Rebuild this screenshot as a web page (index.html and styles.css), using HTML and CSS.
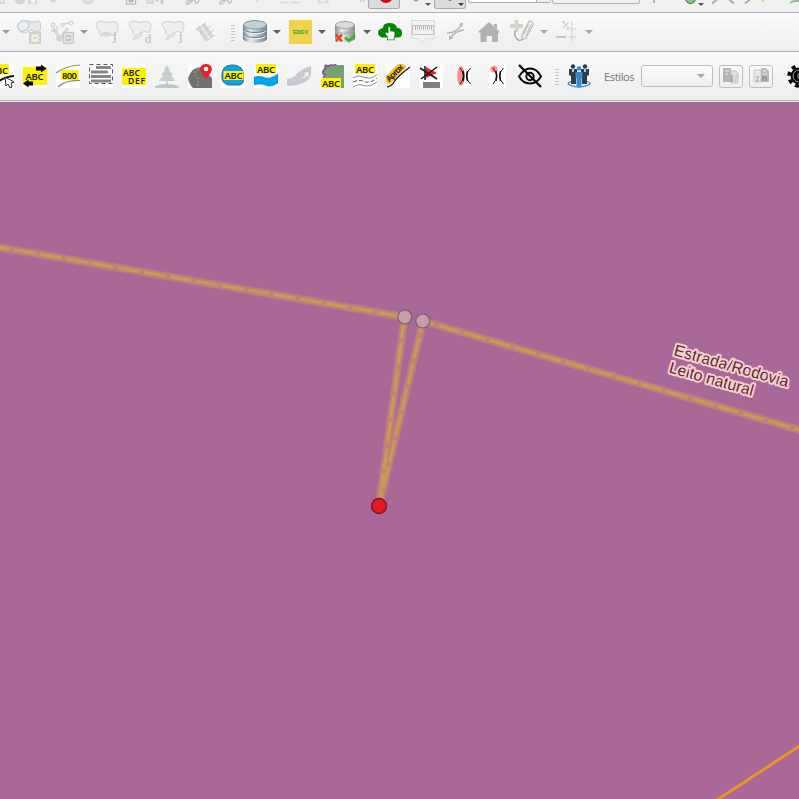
FILE: index.html
```html
<!DOCTYPE html>
<html lang="pt">
<head>
<meta charset="utf-8">
<title>Mapa</title>
<link rel="stylesheet" href="styles.css">
</head>
<body>
<div class="bar top">
  <svg width="368" height="12" fill="none" stroke="#d2d2cd" stroke-width="1.5">
    <path d="M0 0v3h4V0" stroke="#e0cccc"/><circle cx="20" cy="-1" r="4.500" fill="#d5d5d5"/><rect x="28" y="-5" width="9" height="9" fill="#e0d2d2" stroke="none"/><path d="M31 0l4 3M35 0l-4 3" stroke="#fff"/>
    <circle cx="53" cy="-1" r="2.500" fill="#ccc"/><circle cx="88" cy="-2" r="5.500" fill="#dcdcd4"/>
    <rect x="126.500" y="-5" width="9" height="9" stroke="#bdc1c1"/><path d="M129 0q2 3 4 0" stroke="#9fa5a5"/>
    <path d="M147 0v3h6V0M149 0l3 3" stroke="#dfcccc"/><path d="M156 1l2-2M162 0v4" stroke="#c8c8c8" stroke-width="3"/>
    <path d="M192 0c-5 0-7 4-4 4 3-1 4-4 6-4s1 4 3 3 2-3 1-3M225 0c-5 0-7 4-4 4 3-1 4-4 6-4s1 4 3 3 2-3 1-3" stroke="#c9c2c2"/>
    <path d="M256 0l2 2M280 2.500h9M291 2.500h9M318 2.500h10l-2-3M320 0l-2 2" stroke="#d6d6d6"/>
    <path d="M361 0v2M364 0v2" stroke="#bbb" stroke-width="1"/>
  </svg>
  <span class="pressed rec"><svg width="30" height="8"><circle cx="17" cy="-4" r="7" fill="#d80505"/></svg></span>
  <svg width="34" height="12"><circle cx="16" cy="-1" r="2.500" fill="#999"/><path d="M25 3h6l-3 3z" fill="#555"/></svg>
  <span class="pressed tool"><svg width="30" height="8"><circle cx="15" cy="-1" r="2" fill="#777"/><path d="M23 3h6l-3 3z" fill="#444"/></svg></span>
  <span class="spin"><i></i></span>
  <span class="field"></span>
  <svg width="159" height="12" fill="none" stroke="#85bd85" stroke-width="1.800"><path d="M14 0v3M72 3.500l5-4M94 3.500l-5-4M105 3.500l5-4"/><circle cx="50.500" cy="-1.500" r="5" fill="#8bc48b" stroke="#555" stroke-width="1"/><path d="M58 3h6l-3 3z" fill="#555" stroke="none"/><path d="M123 0v2" stroke="#f0ca53"/><path d="M150 3q4-3 9-2"/><path d="M155 0h4v2" stroke="#aaa"/></svg>
</div>

<div class="bar mid">
  <b class="arrow a0"></b>
  <svg class="ic g9" viewBox="0 0 24 24" fill="none"><path d="M6 1h6q3 2 9 0 4 0 2 10-5 2-9-1-3 2-6 3-6 0-7-5Q0 2 6 1z" fill="#e6e6e4" stroke="#cbcac6"/><path d="M5 1q5-1 7 2 0 5-3 7-3 2-6 1Q-1 7 2 3z" fill="#e9eef2" stroke="#b9c2ca"/><rect x="12.500" y="12.500" width="11" height="11" fill="#d9d7cb" stroke="#cdcbc0"/><path d="M18 14v8M14 18h8M15 15l6 6M21 15l-6 6" stroke="#fff" stroke-width="1.100"/><circle cx="18" cy="18" r="1.500" fill="#d0cebf"/></svg>
  <svg class="ic g9" viewBox="0 0 24 24" fill="none" stroke="#d2d2d0" stroke-width="1.300"><circle cx="3" cy="5" r="1.800"/><circle cx="21" cy="3" r="1.800"/><circle cx="12.500" cy="5" r="1.500"/><path d="M3 8l6 9M18 8l-7 9" stroke-width="2.300"/><path d="M14 4l5-1M1 11h6V6"/><circle cx="9.500" cy="18.500" r="2.500" fill="#d2d2d0"/><rect x="13.500" y="12.500" width="10" height="11" fill="#e3e4e6" stroke="#c5c9ce"/><path d="M16 17a3 3 0 0 1 5 0M21 19a3 3 0 0 1-5 0" stroke="#b4bac1" stroke-width="1.500"/></svg>
  <b class="arrow g6"></b>
  <svg class="ic g7" viewBox="0 0 24 24" fill="none"><path class="poly" d="M4 1.500q4-1 8 1 4-1 7-1 4 0 4 4 0 5-2 9l-4 1q-6-3-10 1-3-1-3-6Q-2 3 4 1.500z"/><path d="M5 14q6-5 13 1l-7 2z" fill="#d8d8d6"/><text x="18" y="20" class="let">j</text></svg>
  <svg class="ic g9" viewBox="0 0 24 24" fill="none"><path class="poly" d="M4 1.500q4-1 8 1 4-1 7-1 4 0 4 4 0 4-2 7-5-2-8 0-3 4-6 3-3-1-3-6Q-2 3 4 1.500z"/><path d="M5 18l8-5 1 2-8 5z" class="poly"/><text x="17" y="22.500" class="let">d</text></svg>
  <svg class="ic g9" viewBox="0 0 24 24" fill="none"><path class="poly" d="M4 1.500q4-1 8 1 4-1 7-1 4 0 4 4 0 4-2 7-5-2-8 0-3 4-6 3-3-1-3-6Q-2 3 4 1.500z"/><path d="M5 18l8-5 1 2-8 5z" class="poly"/><text x="18" y="20" class="let">j</text></svg>
  <svg class="ic g9" viewBox="0 0 24 24" fill="none" stroke="#d6d6d4"><path d="M4 7l9 13M9 4l9 13" stroke-width="4"/><path d="M2 10l10-7M6 14l11-8M9 18l11-8M12 21l9-6" stroke="#cacac8" stroke-width="1"/><path d="M6 5l11 15" stroke="#f0f0f0" stroke-width=".8"/></svg>
  <i class="grip g13"></i>
  <svg class="ic g8" viewBox="0 0 24 24"><defs><linearGradient id="m"><stop offset="0" stop-color="#71858d"/><stop offset=".3" stop-color="#e3ecef"/><stop offset=".6" stop-color="#b2c2c9"/><stop offset="1" stop-color="#6d7e87"/></linearGradient></defs><path d="M0 4.500v14.500c2 5 22 5 24 0V4.500z" fill="url(#m)"/><ellipse cx="12" cy="4.800" rx="11.500" ry="4.200" fill="#c3d0d5" stroke="#82939a"/><path d="M.5 9.500c3 4 20 4 23 0M.5 14.500c3 4 20 4 23 0" fill="none" stroke="#6c7e87"/><path d="M1 10.800c3 4 19 4 22 0M1 15.800c3 4 19 4 22 0" fill="none" stroke="#eef4f6"/></svg>
  <b class="arrow g6 dark"></b>
  <span class="edgv">EDGV</span>
  <b class="arrow g6 dark"></b>
  <svg class="ic g7" viewBox="0 0 24 24"><defs><linearGradient id="s"><stop offset="0" stop-color="#8c8c8c"/><stop offset=".35" stop-color="#eee"/><stop offset="1" stop-color="#868686"/></linearGradient></defs><path d="M2 5v14c2 4 18 4 20 0V5z" fill="url(#s)"/><ellipse cx="12" cy="5" rx="9.500" ry="3.500" fill="#dadada" stroke="#a3a3a3"/><path d="M2 11c3 3 17 3 20 0" fill="none" stroke="#a3a3a3"/><path d="M3 14.500l6 7M9 14.500l-6 7" stroke="#e8431c" stroke-width="2.500"/><path d="M12 17.500l4 3.500 6-6" fill="none" stroke="#35ba21" stroke-width="2.500"/></svg>
  <b class="arrow g6 dark"></b>
  <svg class="ic g7" viewBox="0 0 24 24"><path d="M4 17.500Q0 16 0 12.500T5 8Q5 3 11.500 3 18 3 19 8q5 0 5 5t-5 4.500z" fill="#058505"/><path d="M9.500 20v-3L7 13.500q1-2 3-.5V7.500q1-2 2.500 0V11q5-.5 4.500 3l-1 6z" fill="#f6f6f6" stroke="#058505" stroke-width=".8"/><path d="M8.500 20.500h9" stroke="#c8d8c8"/></svg>
  <svg class="ic g9" viewBox="0 0 24 24" fill="none"><path d="M.5.500h23v18H15l-3.500 4-3.500-4H.5z" fill="#f3f3f2" stroke="#d8d8d6"/><rect x="1.500" y="5.500" width="21" height="9" stroke="#c2c2c2"/><path d="M4.500 6v4M6.500 6v3M8.500 6v4M10.500 6v3M12.500 6v4M14.500 6v3M16.500 6v4M18.500 6v3M20.500 6v4" stroke="#b5b5b3"/></svg>
  <svg class="ic g9" viewBox="0 0 24 24" fill="none" stroke="#b3b3b3" stroke-width="1.500"><path d="M3 13q10 0 14-8M6 19q4-8 14-9"/><path d="M15 4l4-1.500-.5 4.500zM5 15.500V20l4-2z" fill="#b3b3b3" stroke="none"/></svg>
  <svg class="ic g9" viewBox="0 0 24 24"><path d="M12 2l11 10-2 1v9h-6v-6H9.500v6H3.500v-9l-2.500-1zM17 4h3v5l-3-3z" fill="#b2b2b2"/></svg>
  <svg class="ic g9" viewBox="0 0 24 24" fill="none"><path d="M6.500 0v12M0 6h13" stroke="#d0d7ca" stroke-width="4"/><path d="M5 11q-1 5 2 8 3 3 5 0" stroke="#a3a3a3" stroke-width="1.300"/><path d="M19 1q5 0 4 4l-7 13-4 2 0-5z" fill="#eee" stroke="#aeaeaa"/><path d="M18.500 3.500l-5 11M21 4.500l-5 11" stroke="#bcbcb8"/></svg>
  <b class="arrow g6 mute"></b>
  <svg class="ic g8" viewBox="0 0 24 24" fill="none" stroke="#d2d2d2" stroke-width="1.300"><path d="M7 2l6 6M13 2l-6 6M6 2h3"/><path d="M0 17h10" stroke="#c0c8c0" stroke-width="2"/><path d="M13 17h7M16 2v19M10 9h10" stroke-dasharray="3 1"/></svg>
  <b class="arrow g5 mute"></b>
</div>

<div class="bar labels">
  <svg class="ic card" viewBox="0 0 24 24"><rect y="0" width="19" height="10.500" rx="2" fill="#fff200"/><text x="0" y="9.500" class="abc" textLength="18">ABC</text><path d="M6 20Q12 13 24 12" stroke="#111" stroke-width="1.800" fill="none"/><path d="M15 13l1 9 2-2 2 4 2-1-1-4 3-1z" fill="#fff" stroke="#222"/></svg>
  <svg class="ic card" viewBox="0 0 24 24"><rect y="3" width="24" height="18" fill="#fff200"/><text x="2.500" y="15.500" class="abc" textLength="18">ABC</text><path d="M13 2.500h5V.5l5.500 4L18 8.500v-2h-5zM10 17.500H5.500v-2L0 19.500l5.500 4v-2H10z"/></svg>
  <svg class="ic card" viewBox="0 0 24 24"><path d="M0 9Q9 2 24 1M2 23Q10 16 24 16.500" stroke="#8a8a8a" stroke-width="1.200" fill="none"/><rect x="5" y="6" width="17.500" height="10" rx="1" fill="#fff200"/><text x="6" y="14.700" class="abc" textLength="15">800</text></svg>
  <svg class="ic card" viewBox="0 0 24 24"><rect x=".5" y=".5" width="23" height="19" fill="none" stroke="#555" stroke-dasharray="4 3"/><path d="M7 3.500h15M2 8h17M2 12.500h20M2 17h20" stroke="#858585" stroke-width="3"/></svg>
  <svg class="ic card" viewBox="0 0 24 24"><rect y="4" width="24" height="17" fill="#fff200"/><text x="1" y="11.500" class="abc s" textLength="17">ABC</text><text x="6" y="20" class="abc s" textLength="17">DEF</text></svg>
  <svg class="ic" viewBox="0 0 24 24"><rect width="24" height="24" fill="#f4f4f4"/><path d="M12 1l3 5h-1l4 5h-2l4 6h-7v5h-2v-5H4l4-6H6l4-5H9z" fill="#c8cecc"/><path d="M0 22q12-4 24 0v2H0z" fill="#bac9c8"/></svg>
  <svg class="ic card" viewBox="0 0 24 24"><path d="M0 14Q4 3 13 3l11 11v10H5q-4-4-5-10z" fill="#717171"/><path d="M9 22Q12 15 8 12t4-8" stroke="#d8cc2a" stroke-width=".8" stroke-dasharray="2 1.500" fill="none"/><path d="M18 15q-6-7-6-10 1-5 6-5t6 5q0 3-6 10z" fill="#f11c28"/><circle cx="18" cy="5" r="2.300" fill="#fff"/></svg>
  <svg class="ic card" viewBox="0 0 24 24"><path d="M1 15Q0 4 6 2q8-3 14 2 4 4 2 9 2 7-4 8H8q-6-1-7-6z" fill="#08a4ef" stroke="#376882"/><rect x="2.500" y="7" width="20" height="9" fill="#fff200"/><text x="3.500" y="15" class="abc" textLength="18">ABC</text></svg>
  <svg class="ic card" viewBox="0 0 24 24"><path d="M0 13q6-2 12 1 5 1 12-4v9q-7 5-13 2-5-2-11 0z" fill="#00a3ee" stroke="#0087c5" stroke-width=".5"/><rect x="2" y="0" width="20" height="9.500" fill="#fff200"/><text x="3" y="8.500" class="abc" textLength="18">ABC</text></svg>
  <svg class="ic" viewBox="0 0 24 24"><rect width="24" height="24" fill="#f5f5f5"/><path d="M0 15q6-1 9-4 3-5 15-9v9q-3 7-9 8-3 3-15 3z" fill="#c4cacf"/><path d="M12 14.500q5-1 6.500-4.500l-2-1 5-1v5l-1.500-1.500q-2 3-8 3z" fill="#f4f4f4"/></svg>
  <svg class="ic card" viewBox="0 0 24 24"><path d="M5 1h19v23H12l-5-8H5q-1-4 0-5-4-2-1-5 2-1 1-5z" fill="#75a172"/><path d="M5 1q3 2 6 0 4 1 5-1M5 1q1 3-1 5-3 3 1 5-3 4 0 5" fill="none" stroke="#81559c" stroke-width="1.800"/><rect x="1" y="14" width="20" height="10" fill="#fff200"/><text x="2" y="22.800" class="abc" textLength="18">ABC</text></svg>
  <svg class="ic card" viewBox="0 0 24 24"><rect x="2" y="0" width="20" height="9.500" fill="#fff200"/><text x="3" y="8.500" class="abc" textLength="18">ABC</text><path d="M0 13.500q7-3 12 0 6 2 12-3M0 23q6-4 12-1 6 1 12-4" fill="none" stroke="#7b868e" stroke-width=".9"/><path d="M0 18q7-3 12 0 6 1 12-4" fill="none" stroke="#444" stroke-width=".9" stroke-dasharray="4 2"/></svg>
  <svg class="ic card" viewBox="0 0 24 24"><g transform="rotate(-46 9 10)"><rect x="-3" y="5" width="25" height="8.500" fill="#f9c423"/><text x="-1" y="12" class="abc s" textLength="21">Aprox</text></g><path d="M1 23q5-1 7-5Q12 12 24 3" fill="none" stroke="#111" stroke-width="1.300"/></svg>
  <svg class="ic card" viewBox="0 0 24 24"><path d="M7 3l11 6-11 5z" fill="#ef1e2b"/><path d="M1 4l17 11M2 15L18 3M6 2v14" stroke="#111" stroke-width="1.500"/><rect x="4" y="18" width="17" height="6" fill="#808080"/></svg>
  <svg class="ic narrow" viewBox="0 0 24 24"><rect x="5" width="14" height="24" fill="#fff"/><ellipse cx="9" cy="12" rx="3.800" ry="10" fill="#ff8c8c"/><path d="M8 4q7 8 0 16M18.500 4q-8 8 0 16" fill="none" stroke="#111"/><path d="M11 7q1.500 5 0 10M15.500 7q-1.500 5 0 10" fill="none" stroke="#111" stroke-width="1.600"/></svg>
  <svg class="ic narrow" viewBox="0 0 24 24"><rect x="4" width="17" height="24" fill="#fff"/><circle cx="9" cy="5" r="3.500" fill="#ff8c8c"/><path d="M8 4q7 8 0 16M18.500 4q-8 8 0 16" fill="none" stroke="#111"/><path d="M11 7q1.500 5 0 10M15.500 7q-1.500 5 0 10" fill="none" stroke="#111" stroke-width="1.500"/></svg>
  <svg class="ic" viewBox="0 0 24 24" fill="none" stroke="#080808" stroke-width="2"><path d="M1 12.500Q6 4.500 12 4.500q7 0 11 8-4 7-11 7T1 12.500z"/><circle cx="12" cy="12.500" r="3.700"/><path d="M1 1l22 22" stroke-width="2.300"/></svg>
  <i class="grip lg"></i>
  <svg class="ic people" viewBox="0 0 24 24"><path d="M4 17.500q-6 2 0 4 8 3 16 0 6-2 0-4" fill="none" stroke="#3186c9" stroke-width="1.300"/><circle cx="6" cy="2.500" r="2.200" fill="#293e51"/><circle cx="18" cy="2.500" r="2.200" fill="#293e51"/><path d="M2 5h8v8H9v7H4v-8l-2-1zM14 5h8v6l-2 1v8h-5v-7h-1z" fill="#293e51"/><path d="M5.300 5L6 8l.7-3M17.300 5l.7 3 .7-3" stroke="#fff" stroke-width=".8" fill="none"/><circle cx="12" cy="4.500" r="2.200" fill="#3189ce"/><path d="M8.500 8h7v6h-1v8h-5v-8h-1z" fill="#3189ce"/></svg>
  <span class="estilos">Estilos</span>
  <span class="combo"><b class="arrow mute"></b></span>
  <span class="btn b1"><svg width="18" height="18"><path d="M1 1h8v14H1z" fill="#b4b4b4"/><path d="M9 4h5l2 2v10H9z" fill="#e3e3e3" stroke="#c2c2c2"/><path d="M3 4h4M3 7h3" stroke="#eee"/><path d="M5 8h6v7H8V9" fill="#acacac"/><path d="M12 9h3l-3 5h3" stroke="#c0c0c0" fill="none"/></svg></span>
  <span class="btn b2"><svg width="18" height="18"><path d="M2 3h7v12H2z" fill="#e6e6e6" stroke="#ccc"/><path d="M9 1h5l3 3v11H9z" fill="#bababa"/><path d="M3 5h4M11 4h3M11 7h4" stroke="#eee"/><path d="M4 10h3l-3 4h3" stroke="#a3a3a3" fill="none"/><path d="M11 14v-4h3v4" stroke="#8c8c8c" stroke-width="1.500" fill="none"/></svg></span>
  <svg class="ic gear" viewBox="0 0 24 24"><circle cx="12" cy="12" r="8.500" fill="#050505"/><circle cx="12" cy="12" r="10" fill="none" stroke="#050505" stroke-width="3.500" stroke-dasharray="4 3.850"/><circle cx="12" cy="12" r="6" fill="none" stroke="#bbb" stroke-width=".8"/><circle cx="13" cy="12" r="3" fill="#666"/></svg>
</div>

<svg class="map" viewBox="0 103 799 696">
  <g class="halo"><path d="M-5 246.600L404.500 317"/><path d="M404.500 317L379 506L423 321"/><path d="M423 321L805 431.500"/></g>
  <g class="edge"><path d="M-5 246.600L404.500 317"/><path d="M404.500 317L379 506L423 321"/><path d="M423 321L805 431.500"/></g>
  <g class="dash"><path d="M0 247.500L404.500 317" stroke-dashoffset="12.300"/><path d="M404.500 317L379 506"/><path d="M379 506L423 321" stroke-dashoffset="7"/><path d="M423 321L805 431.500" stroke-dashoffset="10"/></g>
  <path d="M717 800L801 745" stroke="#e99527" stroke-width="3"/>
  <g class="nodes"><circle cx="404.800" cy="317" r="7"/><circle cx="422.800" cy="321" r="7"/></g>
  <circle cx="379" cy="506" r="7.500" fill="#e51921" stroke="#8b111f" stroke-width="1.300"/>
  <g class="maplabel" transform="translate(673 355) rotate(15.700)"><text x="0" y="0" textLength="118.500">Estrada/Rodovia</text><text x="0" y="18" textLength="87">Leito natural</text></g>
</svg>
</body>
</html>
```
FILE: styles.css
```css
* { box-sizing: border-box; }
body { margin: 0; width: 799px; height: 799px; overflow: hidden; background: #efefef; font-family: "Open Sans", "Noto Sans", sans-serif; }
svg { display: block; flex: none; }
.bar { display: flex; align-items: center; width: 799px; overflow: hidden; background: linear-gradient(#fafafa, #ededed); border-bottom: 1px solid #b1b1b1; }
.top { height: 13px; align-items: flex-start; background: #f0f0f0; }
.mid { height: 39px; }
.labels { height: 49px; box-shadow: inset 0 1px #fdfdfd; }
.ic { width: 24px; height: 24px; overflow: hidden; }
.card { background: #fff; }
.narrow { overflow: hidden; }

.pressed { flex: none; height: 9px; background: #dcdcdc; border: 1px solid #aaa; border-top: 0; border-radius: 0 0 3px 3px; }
.rec { width: 32px; }
.tool { width: 32px; }
.spin { flex: none; width: 83px; height: 3px; margin-left: 2px; border: 1px solid #aaa; border-top: 0; border-radius: 0 0 3px 3px; background: #fff; display: flex; justify-content: flex-end; }
.spin i { width: 14px; background: #eee; border-left: 1px solid #aaa; }
.field { flex: none; width: 88px; height: 4px; margin-left: 1px; border: 1px solid #b0b0b0; border-top: 0; border-radius: 0 0 3px 3px; }

.arrow { flex: none; width: 8px; height: 4px; background: #999; clip-path: polygon(0 0, 100% 0, 50% 100%); }
.dark { background: #5c5c5c; }
.mute { background: #a5a5a5; }
.a0 { margin-left: 2px; }
.g5 { margin-left: 5px; }
.g6 { margin-left: 6px; }
.g7 { margin-left: 7px; }
.g8 { margin-left: 8px; }
.g9 { margin-left: 9px; }
.g13 { margin-left: 13px; }
.a0 + .g9 { margin-left: 7px; }
.grip { flex: none; width: 4px; height: 17px; background: radial-gradient(circle, #b4b4b4 0.6px, transparent 0.9px) 0 0 / 2px 3px; opacity: .7; }
.poly { fill: #eeeeec; stroke: #d0d0ce; }
.let { font: 12.500px "Liberation Serif", serif; fill: #b4b4b4; }
.edgv { flex: none; width: 23px; height: 24px; margin-left: 8px; background: #f0d24b; color: #1fa01f; font: bold 5.500px/25px "Liberation Sans", sans-serif; text-align: center; letter-spacing: -.2px; }
.edgv + .arrow { margin-left: 6px; }

.labels > .ic { margin-left: 9px; }
.labels > .ic:first-child { margin-left: -10px; }
.labels .grip { margin-left: 13px; }
.labels > .people { margin-left: 8px; }
.abc { font: 600 9.500px "Noto Sans", "Open Sans", sans-serif; fill: #1c1c00; }
.abc.s { font-size: 8.500px; }
.estilos { flex: none; width: 37px; margin-left: 13px; font-size: 11px; letter-spacing: -.35px; line-height: 20px; color: #747480; padding-top: 2px; }
.combo { flex: none; display: flex; align-items: center; justify-content: flex-end; width: 72px; height: 22px; padding-right: 7px; border: 1px solid #bebebe; border-radius: 3px; background: linear-gradient(#fcfcfc, #eee); }
.btn { flex: none; display: flex; align-items: center; justify-content: center; width: 24px; height: 23px; border: 1px solid #bdbdbd; border-radius: 3px; background: linear-gradient(#fbfbfb, #efefef); }
.b1 { margin-left: 6px; }
.b2 { margin-left: 6px; }
.labels > .gear { margin-left: 14px; }

.map { width: 799px; height: 697px; margin-top: 1px; background: #a86898; border-top: 1px solid #98718e; }
.halo { fill: none; stroke: #b57788; stroke-width: 8.500; }
.edge { fill: none; stroke: #bf8376; stroke-width: 6.500; }
.dash { fill: none; stroke: #c99a54; stroke-width: 3; stroke-dasharray: 21.700 4.700; }
.nodes { fill: #c99da6; stroke: #725d75; stroke-width: 1.200; }
.maplabel { font: 16px "Liberation Sans", Arial, sans-serif; fill: #572b33; stroke: #f8cfd0; stroke-width: 4px; stroke-linejoin: round; paint-order: stroke; }
```
